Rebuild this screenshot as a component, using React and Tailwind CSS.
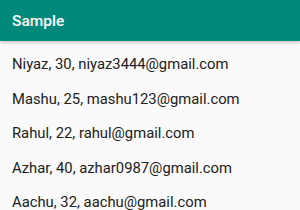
const people = [
  { name: "Niyaz", age: 30, email: "niyaz3444@gmail.com" },
  { name: "Mashu", age: 25, email: "mashu123@gmail.com" },
  { name: "Rahul", age: 22, email: "rahul@gmail.com" },
  { name: "Azhar", age: 40, email: "azhar0987@gmail.com" },
  { name: "Aachu", age: 32, email: "aachu@gmail.com" },
];

export default function App() {
  return (
    <div className="w-[300px] h-[210px] overflow-hidden bg-[#fafafa] font-['Roboto',sans-serif]">
      <header className="h-[41px] bg-[#00897b] flex items-center px-3 pt-[2px] shadow-[0_2px_3px_rgba(0,0,0,0.2)] relative">
        <h1 className="text-white text-[15.5px] font-medium">Sample</h1>
      </header>
      <ul className="pt-[6px]">
        {people.map((p) => (
          <li key={p.name} className="h-[34.5px] flex items-center px-3 text-[14.8px] text-[#212121]">
            {p.name}, {p.age}, {p.email}
          </li>
        ))}
      </ul>
    </div>
  );
}
